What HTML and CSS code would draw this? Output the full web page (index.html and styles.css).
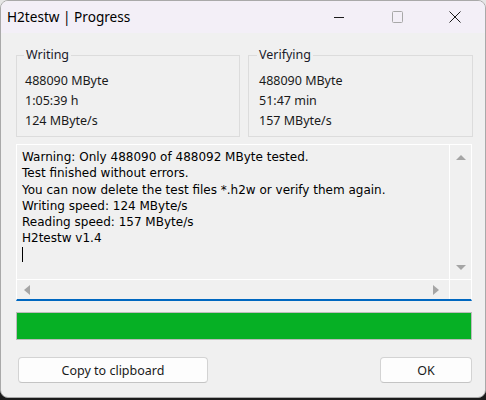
FILE: index.html
```html
<!DOCTYPE html>
<html>
<head>
<meta charset="utf-8">
<link rel="stylesheet" href="styles.css">
</head>
<body>
<div class="window">
  <div class="titlebar">
    <span class="title">H2testw | Progress</span>
    <div class="controls">
      <span class="ctl"><svg width="12" height="12" viewBox="0 0 12 12"><path d="M1 6.5h10" stroke="#1b1b1b" stroke-width="1"/></svg></span>
      <span class="ctl"><svg width="12" height="12" viewBox="0 0 12 12"><rect x="1.5" y="0.5" width="10" height="11" rx="1" fill="none" stroke="#a8a8a8" stroke-width="1"/></svg></span>
      <span class="ctl"><svg width="12" height="12" viewBox="0 0 12 12"><path d="M0.5 0.5l11 11M11.5 0.5l-11 11" stroke="#1b1b1b" stroke-width="1"/></svg></span>
    </div>
  </div>
  <div class="content">
    <div class="groups">
      <fieldset class="group">
        <legend>Writing</legend>
        <div class="line">488090 MByte</div>
        <div class="line">1:05:39 h</div>
        <div class="line">124 MByte/s</div>
      </fieldset>
      <fieldset class="group">
        <legend>Verifying</legend>
        <div class="line">488090 MByte</div>
        <div class="line">51:47 min</div>
        <div class="line">157 MByte/s</div>
      </fieldset>
    </div>
    <div class="edit">
      <div class="edit-main">
        <div class="text">
          <div>Warning: Only 488090 of 488092 MByte tested.</div>
          <div>Test finished without errors.</div>
          <div>You can now delete the test files *.h2w or verify them again.</div>
          <div>Writing speed: 124 MByte/s</div>
          <div>Reading speed: 157 MByte/s</div>
          <div>H2testw v1.4</div>
          <div><span class="caret"></span></div>
        </div>
        <div class="vscroll">
          <span class="arrow up"></span>
          <span class="arrow down"></span>
        </div>
      </div>
      <div class="hrow">
        <div class="hscroll">
          <span class="arrow left"></span>
          <span class="arrow right"></span>
        </div>
        <div class="corner"></div>
      </div>
    </div>
    <div class="progress"><div class="fill" style="width:100%"></div></div>
    <div class="buttons">
      <button class="btn btn-copy">Copy to clipboard</button>
      <button class="btn btn-ok">OK</button>
    </div>
  </div>
</div>
</body>
</html>
```
FILE: styles.css
```css
html, body {
  margin: 0;
  padding: 0;
}
body {
  width: 486px;
  height: 400px;
  background: linear-gradient(#e6e6e6 0 50%, #1c1c1c 50% 100%);
  overflow: hidden;
}
.window {
  box-sizing: border-box;
  width: 486px;
  height: 398px;
  background: #f0f0f0;
  border: 1px solid #a9a9a9;
  border-radius: 8px;
  overflow: hidden;
  font-family: "Noto Sans", sans-serif;
  color: #1a1a1a;
}
.titlebar {
  height: 32px;
  background: #f3eff7;
  display: flex;
  align-items: center;
  justify-content: space-between;
}
.title {
  margin-left: 6px;
  font-size: 13.6px;
  color: #000;
  padding-bottom: 1px;
}
.controls {
  display: flex;
  align-items: center;
  margin-right: 24px;
  gap: 46px;
}
.ctl {
  display: flex;
  width: 12px;
  height: 12px;
}
.content {
  padding: 14px 13px 0 15px;
}
.groups {
  display: flex;
  gap: 8px;
}
.group {
  flex: 0 0 auto;
  margin: 0;
  padding: 8px 8px 5px 7px;
  border: 1px solid #dcdcdc;
  box-sizing: border-box;
  font-size: 12.5px;
}
.group:first-child { width: 224px; padding-left: 8px; }
.group:last-child { width: 225px; padding-left: 10px; }
.group legend {
  padding: 0 2px;
  margin-left: -1px;
  line-height: 16px;
  color: #1a1a2a;
}
.group:last-child legend { margin-left: -2px; }
.line {
  line-height: 20px;
  height: 20px;
}
.edit {
  margin-top: 7px;
  border: 1px solid #fff;
  border-bottom: 2px solid #0067c0;
  height: 157px;
  box-sizing: border-box;
  display: flex;
  flex-direction: column;
}
.edit-main {
  display: flex;
  height: 134px;
  border-bottom: 1px solid #fff;
}
.text {
  flex: 1;
  padding: 4px 0 0 5px;
  font-family: "DejaVu Sans", sans-serif;
  font-size: 12px;
  line-height: 16.3px;
  color: #000;
  border-right: 1px solid #fff;
  white-space: nowrap;
  overflow: hidden;
}
.caret {
  display: inline-block;
  width: 1px;
  height: 15px;
  background: #000;
  vertical-align: -3px;
}
.vscroll {
  width: 21px;
  display: flex;
  flex-direction: column;
  justify-content: space-between;
  align-items: center;
  padding: 10px 0 9px;
  box-sizing: border-box;
}
.hrow {
  flex: 1;
  display: flex;
}
.hscroll {
  flex: 1;
  display: flex;
  justify-content: space-between;
  align-items: center;
  padding: 0 10px 0 7px;
  border-right: 1px solid #fff;
}
.corner {
  width: 21px;
}
.arrow {
  width: 0;
  height: 0;
  display: block;
}
.arrow.up {
  border-left: 5px solid transparent;
  border-right: 5px solid transparent;
  border-bottom: 5px solid #a5a5a5;
}
.arrow.down {
  border-left: 5px solid transparent;
  border-right: 5px solid transparent;
  border-top: 5px solid #a5a5a5;
}
.arrow.left {
  border-top: 5px solid transparent;
  border-bottom: 5px solid transparent;
  border-right: 6px solid #a5a5a5;
}
.arrow.right {
  border-top: 5px solid transparent;
  border-bottom: 5px solid transparent;
  border-left: 6px solid #a5a5a5;
}
.progress {
  margin-top: 11px;
  height: 28px;
  box-sizing: border-box;
  border: 1px solid #bcbcbc;
  background: #e6e6e6;
}
.fill {
  height: 100%;
  background: #06b025;
}
.buttons {
  margin-top: 17px;
  display: flex;
  justify-content: space-between;
  padding-left: 2px;
}
.btn {
  height: 26px;
  box-sizing: border-box;
  background: #fdfdfd;
  border: 1px solid #d3d3d3;
  border-bottom-color: #c4c4c4;
  border-radius: 4px;
  font-family: "Noto Sans", sans-serif;
  font-size: 12.5px;
  color: #1a1a1a;
  padding: 0;
}
.btn-copy { width: 190px; }
.btn-ok { width: 92px; }
```
